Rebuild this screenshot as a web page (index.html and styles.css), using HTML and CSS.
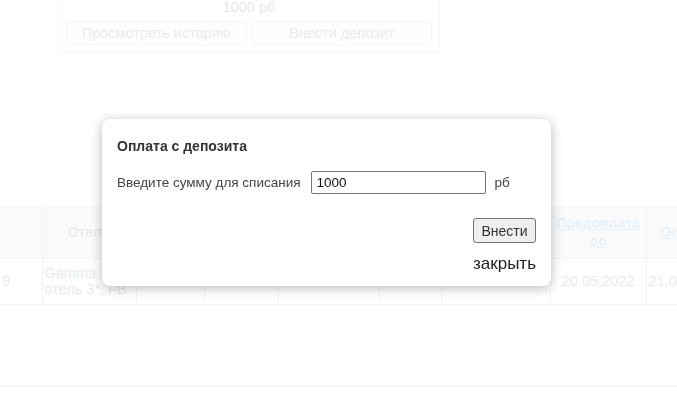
FILE: index.html
```html
<!DOCTYPE html>
<html lang="ru">
  <head>
    <meta charset="UTF-8" />
    <title>Оплата с депозита</title>
    <link rel="stylesheet" href="styles.css">
  </head>
  <body>
    <div class="page">
      <div class="deposit-card">
        <div class="deposit-sum">1000 рб</div>
        <div class="deposit-actions">
          <button class="card-btn">Просмотреть историю</button>
          <button class="card-btn">Внести депозит</button>
        </div>
      </div>

      <table class="orders">
        <colgroup>
          <col style="width:42px">
          <col style="width:94px">
          <col style="width:68px">
          <col style="width:74px">
          <col style="width:101px">
          <col style="width:62px">
          <col style="width:109px">
          <col style="width:96px">
          <col style="width:100px">
        </colgroup>
        <thead>
          <tr>
            <th></th>
            <th>Отель</th>
            <th></th>
            <th></th>
            <th></th>
            <th></th>
            <th></th>
            <th><a href="#">Предоплата до</a></th>
            <th><a href="#">Оплата до</a></th>
          </tr>
        </thead>
        <tbody>
          <tr>
            <td>9</td>
            <td class="hotel">Gamma Sea отель 3*, FB</td>
            <td></td>
            <td></td>
            <td></td>
            <td></td>
            <td></td>
            <td class="center">20.05.2022</td>
            <td>21.07.2022</td>
          </tr>
        </tbody>
      </table>
      <div class="divider"></div>
    </div>

    <div class="overlay"></div>

    <div class="modal" role="dialog" aria-label="Оплата с депозита">
      <div class="modal-title">Оплата с депозита</div>
      <div class="modal-row">
        <label for="sum">Введите сумму для списания</label>
        <input type="text" id="sum" value="1000" />
        <span class="currency">рб</span>
      </div>
      <div class="modal-submit">
        <button class="submit-btn">Внести</button>
      </div>
      <div class="modal-close">закрыть</div>
    </div>
  </body>
</html>
```

FILE: styles.css
```css
body {
  margin: 0;
  font-family: 'Liberation Sans', Arial, sans-serif;
  font-size: 13.5px;
  color: #333;
  background: #fff;
  overflow: hidden;
}

.page {
  width: 760px;
}

/* карточка депозита */
.deposit-card {
  margin-left: 58px;
  width: 382px;
  box-sizing: border-box;
  padding: 0 7px 7px;
  border: 1px solid #bbb;
  border-top: none;
}

.deposit-sum {
  text-align: center;
  line-height: 14px;
  font-size: 14.5px;
  color: #000;
}

.deposit-actions {
  display: flex;
  gap: 5px;
  margin-top: 7px;
}

.card-btn {
  flex: 1;
  height: 24px;
  font-family: inherit;
  font-size: 14.5px;
  color: #222;
  background: #f0f0f0;
  border: 1px solid #999;
  border-radius: 3px;
}

/* таблица */
.orders {
  margin-top: 153px;
  table-layout: fixed;
  border-collapse: collapse;
  width: 746px;
}

.orders th,
.orders td {
  border-left: 1px solid #888;
  padding: 0 2px;
  overflow: hidden;
  white-space: nowrap;
}

.orders th:first-child,
.orders td:first-child {
  border-left: none;
}

.orders thead tr {
  height: 52px;
  background: #ccc;
}

.orders th {
  font-size: 14px;
  line-height: 18px;
  color: #333;
  white-space: normal;
}

.orders th a {
  color: #1d6fb8;
}

.orders tbody tr {
  height: 46px;
  border-top: 1px solid #888;
  border-bottom: 1px solid #888;
}

.orders td {
  font-size: 14.5px;
  color: #222;
}

.orders td.hotel {
  white-space: normal;
  line-height: 16px;
}

.orders td.center {
  text-align: center;
}

.divider {
  margin-top: 81px;
  border-top: 1px solid #888;
}

/* затемнение */
.overlay {
  position: fixed;
  inset: 0;
  background: rgba(255, 255, 255, 0.9);
}

/* модальное окно */
.modal {
  position: fixed;
  left: 102px;
  top: 119px;
  width: 449px;
  height: 167px;
  box-sizing: border-box;
  padding: 20px 15px 0;
  background: #fff;
  border-radius: 8px;
  box-shadow: 0 2px 12px rgba(0, 0, 0, 0.28);
}

.modal-title {
  font-weight: bold;
  font-size: 14px;
  line-height: 15px;
  color: #333;
}

.modal-row {
  display: flex;
  align-items: center;
  margin-top: 17px;
  color: #444;
}

.modal-row input {
  width: 175px;
  height: 23px;
  box-sizing: border-box;
  margin-left: 10px;
  padding: 0 5px;
  font-family: inherit;
  font-size: 13.5px;
  color: #111;
  border: 1px solid #767676;
  border-radius: 2px;
}

.currency {
  margin-left: 9px;
}

.modal-submit {
  display: flex;
  justify-content: flex-end;
  margin-top: 24px;
}

.submit-btn {
  width: 63px;
  height: 25px;
  font-family: inherit;
  font-size: 14px;
  color: #333;
  background: #efefef;
  border: 1px solid #767676;
  border-radius: 3px;
}

.modal-close {
  margin-top: 11px;
  text-align: right;
  font-family: 'Liberation Sans Narrow', 'Liberation Sans', sans-serif;
  font-size: 17px;
  color: #222;
}
```
